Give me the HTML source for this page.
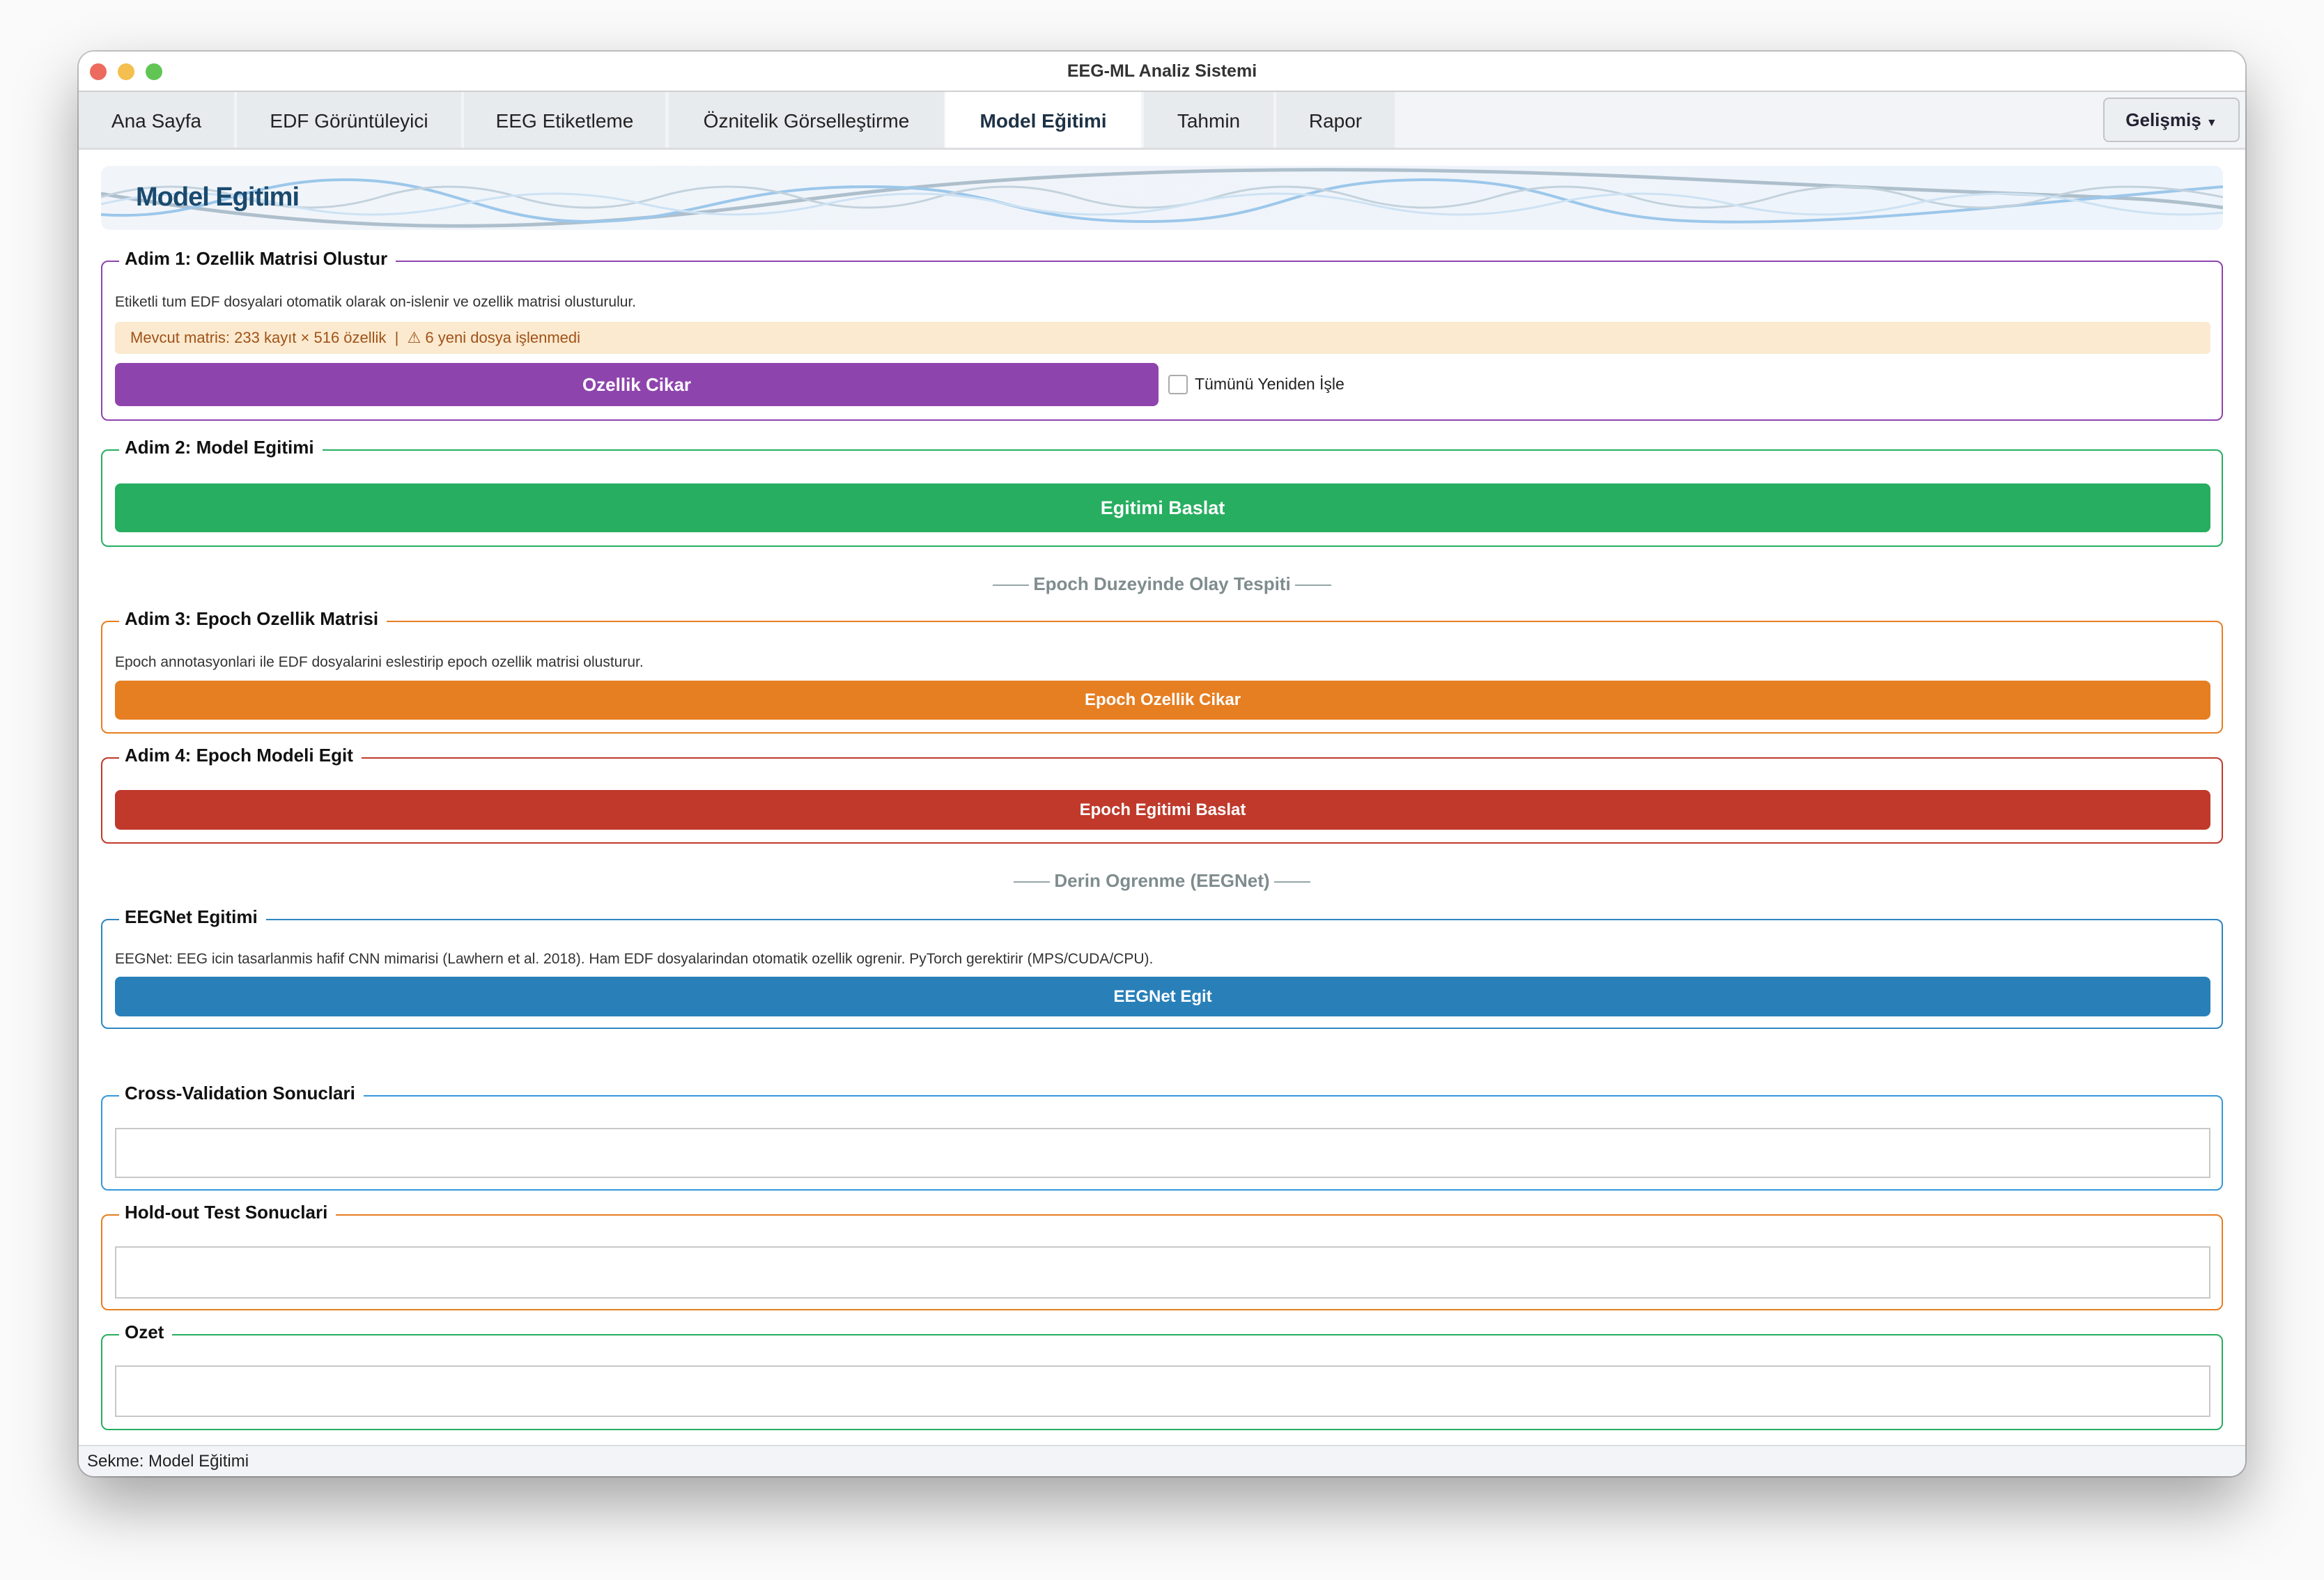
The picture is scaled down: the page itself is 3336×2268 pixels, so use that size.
<!DOCTYPE html>
<html><head><meta charset="utf-8"><style>
*{box-sizing:border-box;margin:0;padding:0}
body{width:3336px;height:2268px;background:#fafafa;font-family:"Liberation Sans",sans-serif;position:relative;overflow:hidden}
.win{position:absolute;left:113px;top:74px;width:3110px;height:2045px;background:#fff;border-radius:22px;box-shadow:0 40px 90px rgba(0,0,0,.35),0 0 0 2px #c8c8c8;overflow:hidden}
.tb{position:absolute;left:0;top:0;width:100%;height:58px;background:#fff;border-bottom:2px solid #d0d0d0}
.dot{position:absolute;top:17px;width:24px;height:24px;border-radius:50%}
.title{position:absolute;top:14px;width:100%;text-align:center;font-weight:bold;font-size:25px;color:#333}
.tabs{position:absolute;top:58px;left:0;width:100%;height:83px;background:#f3f4f7;border-bottom:3px solid #dcdde0}
.tab{position:absolute;top:0;height:80px;background:#e8ebee;font-size:28px;color:#222;text-align:center;line-height:84px}
.tab.on{background:#fff;font-weight:bold;color:#1e3246}
.gel{position:absolute;left:2906px;top:8px;width:196px;height:64px;border:2px solid #c2c5c9;border-radius:8px;background:#eceff1;font-weight:bold;font-size:26px;color:#223;line-height:60px;text-align:center}
.box{position:absolute;left:32px;width:3046px;border:2.5px solid;border-radius:10px}
.lg{position:absolute;left:24px;top:-23px;background:#fff;padding:0 12px 0 8px;font-weight:bold;font-size:26px;color:#111;line-height:36px}
.desc{position:absolute;left:18px;font-size:21px;color:#333}
.btn{position:absolute;left:18px;width:3008px;border-radius:8px;color:#fff;font-weight:bold;text-align:center}
.tx{position:absolute;left:18px;width:3008px;border:2px solid #c8c8c8;background:#fff}
.sep{position:absolute;width:100%;text-align:center;font-weight:bold;font-size:26px;color:#7f8c8d}
.sep span{display:inline-block;width:52px;height:2px;background:#95a5a6;vertical-align:middle;margin:0 6px}
</style></head><body>
<div class="win">
 <div class="tb">
  <div class="dot" style="left:16px;background:#ec6a5e"></div>
  <div class="dot" style="left:56px;background:#f4bf4f"></div>
  <div class="dot" style="left:96px;background:#61c554"></div>
  <div class="title">EEG-ML Analiz Sistemi</div>
 </div>
 <div class="tabs">
  <div class="tab" style="left:0;width:223px">Ana Sayfa</div>
  <div class="tab" style="left:227px;width:322px">EDF Görüntüleyici</div>
  <div class="tab" style="left:553px;width:289px">EEG Etiketleme</div>
  <div class="tab" style="left:847px;width:395px">Öznitelik Görselleştirme</div>
  <div class="tab on" style="left:1244px;width:281px">Model Eğitimi</div>
  <div class="tab" style="left:1529px;width:186px">Tahmin</div>
  <div class="tab" style="left:1719px;width:170px">Rapor</div>
  <div class="gel">Gelişmiş <span style="font-size:16px">▼</span></div>
 </div>
 <div style="position:absolute;left:32px;top:164px;width:3046px;height:92px;border-radius:12px;background:linear-gradient(90deg,#f1f5fa,#eef4fb);overflow:hidden">
  <svg width="3046" height="92" viewBox="0 0 3046 92" style="position:absolute;left:0;top:0">
   <path d="M0 40 C400 110 700 90 1000 50 S1700 -10 2300 20 S2900 40 3046 60" stroke="#aebfcc" stroke-width="5" fill="none"/>
   <path d="M0 70 C150 80 200 20 350 20 S550 80 700 80 S900 30 1100 30 S1300 80 1500 80 S1700 20 1900 20 S2100 75 2300 80 S2700 60 3046 30" stroke="#9cc7ea" stroke-width="4" fill="none"/>
   <path d="M0 45 Q100 15 200 45 T400 45 T600 45 T800 45 T1000 45 T1200 45 T1400 45 T1600 45 T1800 45 T2000 45 T2200 45 T2400 45 T2600 45 T2800 45 T3046 45" stroke="#c3d2dc" stroke-width="3" fill="none"/>
   <path d="M0 55 Q130 25 260 55 T520 55 T780 55 T1040 55 T1300 55 T1560 55 T1820 55 T2080 55 T2340 55 T2600 55 T2860 55 T3120 55" stroke="#cde2f3" stroke-width="3" fill="none"/>
  </svg>
  <div style="position:absolute;left:50px;top:24px;font-weight:bold;font-size:38px;color:#1a4a6e;letter-spacing:-1px">Model Egitimi</div>
 </div>

 <div class="box" style="top:300px;height:230px;border-color:#8e44ad">
  <div class="lg">Adim 1: Ozellik Matrisi Olustur</div>
  <div class="desc" style="top:46px">Etiketli tum EDF dosyalari otomatik olarak on-islenir ve ozellik matrisi olusturulur.</div>
  <div style="position:absolute;left:18px;top:86px;width:3008px;height:46px;background:#fbeacf;border-radius:6px;color:#a0521a;font-size:22px;line-height:46px;padding-left:22px">Mevcut matris: 233 kayıt × 516 özellik &nbsp;| &nbsp;⚠ 6 yeni dosya işlenmedi</div>
  <div class="btn" style="top:145px;width:1498px;height:62px;background:#8e44ad;font-size:26px;line-height:62px">Ozellik Cikar</div>
  <div style="position:absolute;left:1530px;top:162px;width:28px;height:28px;border:2px solid #aaa;border-radius:4px;background:#fff"></div>
  <div style="position:absolute;left:1568px;top:162px;font-size:23px;color:#222">Tümünü Yeniden İşle</div>
 </div>

 <div class="box" style="top:571px;height:140px;border-color:#27ae60">
  <div class="lg">Adim 2: Model Egitimi</div>
  <div class="btn" style="top:47px;height:70px;background:#27ae60;font-size:27px;line-height:70px">Egitimi Baslat</div>
 </div>

 <div class="sep" style="top:749px"><span></span>Epoch Duzeyinde Olay Tespiti<span></span></div>

 <div class="box" style="top:817px;height:162px;border-color:#e67e22">
  <div class="lg">Adim 3: Epoch Ozellik Matrisi</div>
  <div class="desc" style="top:46px">Epoch annotasyonlari ile EDF dosyalarini eslestirip epoch ozellik matrisi olusturur.</div>
  <div class="btn" style="top:84px;height:56px;background:#e67e22;font-size:24px;line-height:56px">Epoch Ozellik Cikar</div>
 </div>

 <div class="box" style="top:1013px;height:124px;border-color:#c0392b">
  <div class="lg">Adim 4: Epoch Modeli Egit</div>
  <div class="btn" style="top:45px;height:57px;background:#c0392b;font-size:24px;line-height:57px">Epoch Egitimi Baslat</div>
 </div>

 <div class="sep" style="top:1175px"><span></span>Derin Ogrenme (EEGNet)<span></span></div>

 <div class="box" style="top:1245px;height:158px;border-color:#2e86c1">
  <div class="lg">EEGNet Egitimi</div>
  <div class="desc" style="top:44px">EEGNet: EEG icin tasarlanmis hafif CNN mimarisi (Lawhern et al. 2018). Ham EDF dosyalarindan otomatik ozellik ogrenir. PyTorch gerektirir (MPS/CUDA/CPU).</div>
  <div class="btn" style="top:81px;height:57px;background:#2980b9;font-size:24px;line-height:57px">EEGNet Egit</div>
 </div>

 <div class="box" style="top:1498px;height:137px;border-color:#3498db">
  <div class="lg">Cross-Validation Sonuclari</div>
  <div class="tx" style="top:45px;height:72px"></div>
 </div>
 <div class="box" style="top:1669px;height:138px;border-color:#e67e22">
  <div class="lg">Hold-out Test Sonuclari</div>
  <div class="tx" style="top:44px;height:75px"></div>
 </div>
 <div class="box" style="top:1841px;height:138px;border-color:#27ae60">
  <div class="lg">Ozet</div>
  <div class="tx" style="top:43px;height:74px"></div>
 </div>

 <div style="position:absolute;left:0;top:2000px;width:100%;height:45px;background:#f3f4f7;border-top:2px solid #dcdde0;font-size:24px;color:#222;padding-left:12px;line-height:44px">Sekme: Model Eğitimi</div>
</div>
</body></html>
